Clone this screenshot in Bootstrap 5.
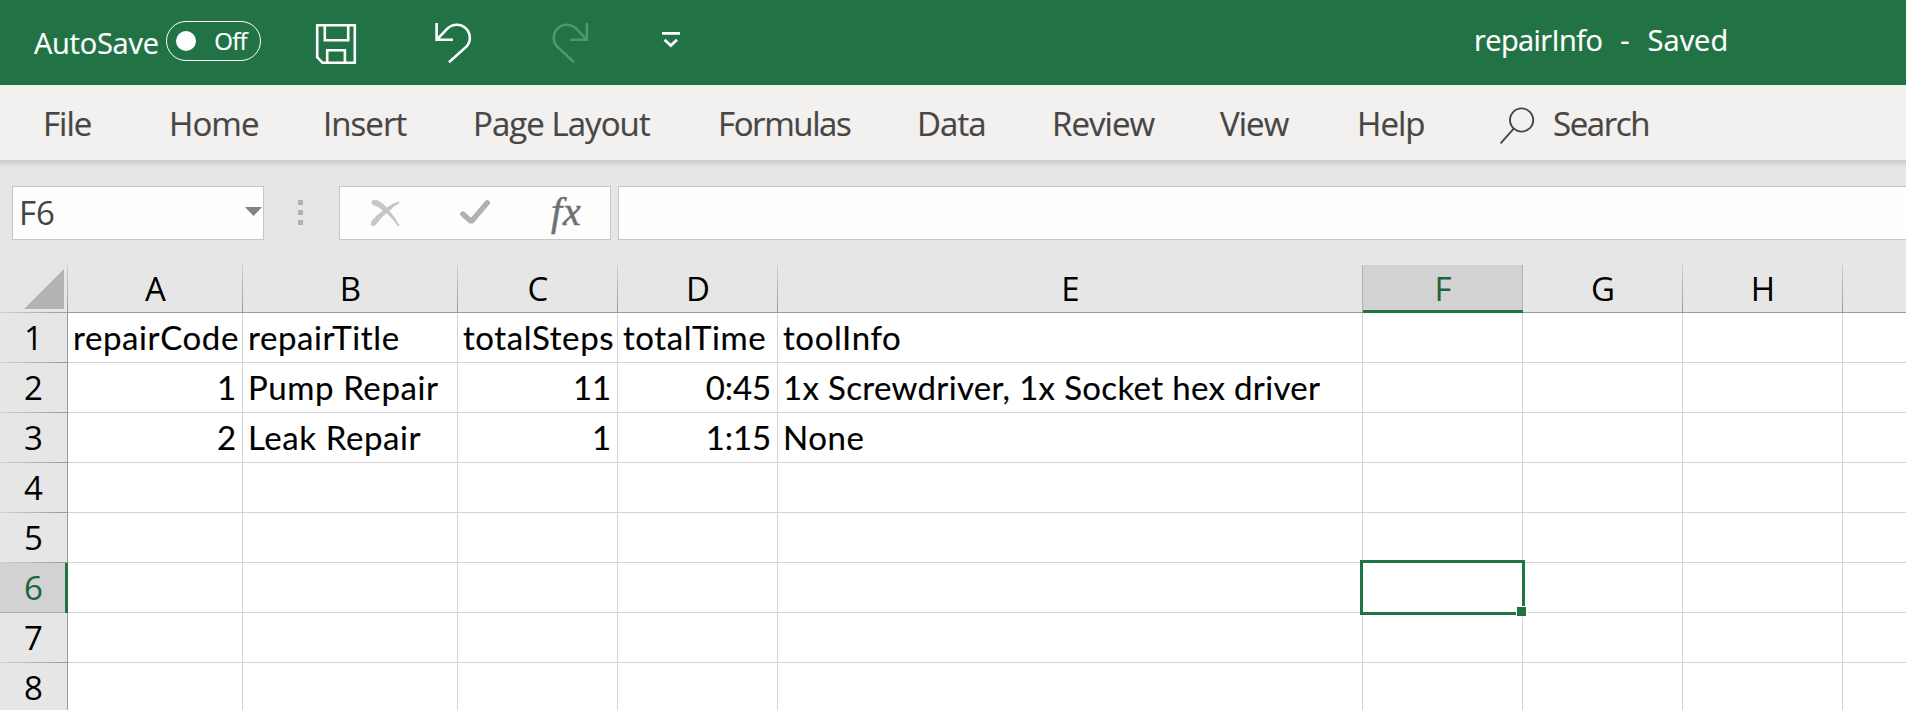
<!DOCTYPE html>
<html lang="en">
<head>
<meta charset="utf-8">
<title>repairInfo - Saved</title>
<link href="https://cdn.jsdelivr.net/npm/bootstrap@5.3.0/dist/css/bootstrap.min.css" rel="stylesheet">
<style>
  body { font-family: "Open Sans", "Noto Sans", sans-serif; font-size: 33px; line-height: 1.2; background: #fff; color: #000; height: 710px; overflow: hidden; }
  svg { display: block; flex: none; }
  .title-bar { height: 85px; background: #217346; color: #fff; font-size: 29px; -webkit-text-stroke: .2px; }
  .autosave { margin-left: 34px; width: 132px; letter-spacing: -.25px; padding-top: 23px; line-height: 40px; }
  .switch-pill { flex: none; width: 95px; height: 40px; margin-top: 21px; border: 1px solid #fff; border-radius: 20px; padding: 0 13px 0 9px; font-size: 24px; letter-spacing: -.7px; }
  .knob { width: 20px; height: 20px; border-radius: 50%; background: #fff; }
  .doc-name { margin-left: 773px; padding-top: 20px; line-height: 40px; gap: 18px; }
  .file-name { letter-spacing: -.6px; }
  .tabs { height: 75px; background: #f3f1f0; color: #484644; display: grid; padding-left: 43px; line-height: 78px;
    grid-template-columns: 126px 154px 150px 245px 199px 135px 168px 137px 140px auto; -webkit-text-stroke: .2px; }
  .tabs .nav-link { padding: 0; color: inherit; white-space: nowrap; letter-spacing: -.95px; }
  .tabs .tight { letter-spacing: -1.4px; }
  .formula-area { height: 105px; background: #e6e6e6 linear-gradient(#cacaca, #e6e6e6) top / 100% 7px no-repeat; padding: 26px 0 0 12px; }
  .field { height: 54px; border: 1px solid #c6c6c6; background: #fdfdfd; }
  .name-box { width: 252px; padding: 0 1px 0 6px; color: #444; }
  .grip { width: 5px; margin: 14px 36px 0 34px; }
  .grip i { display: block; width: 5px; height: 5px; margin-bottom: 5px; background: #b2b2b2; }
  .fx-box { width: 272px; margin-right: 7px; padding-left: 31px; }
  .fx-label { font: italic 40px/50px "Liberation Serif", serif; color: #707070; margin-left: 60px; letter-spacing: .8px; -webkit-text-stroke: .5px; }
  .sheet { table-layout: fixed; width: 1943px; border-collapse: separate; border-spacing: 0; line-height: 40px; }
  .sheet th { font-weight: 400; text-align: center; background-color: #e6e6e6; padding: 0; }
  .sheet thead th { height: 48px; border-bottom: 1px solid #999; background: linear-gradient(#d0d0d0, #999) right / 1px 100% no-repeat #e6e6e6; }
  .sheet thead th:first-child { border-image: linear-gradient(90deg, #d2d2d2, #999) 1; border-width: 0 0 1px; border-style: solid; }
  .sheet tbody th { height: 50px; border-right: 1px solid #999; background: linear-gradient(90deg, #d2d2d2, #999) bottom / 100% 1px no-repeat #e6e6e6; }
  .sheet td { height: 50px; padding: 0 6px 2px 5px; border-right: 1px solid #d4d4d4; border-bottom: 1px solid #d4d4d4; font-family: Lato, sans-serif; letter-spacing: .6px; white-space: nowrap; -webkit-text-stroke: .15px; }
  .sheet td.text-end { letter-spacing: -.1px; }
  .sheet td.long { letter-spacing: .33px; }
  .sheet thead th.picked { background: linear-gradient(#b1b1b1, #b1b1b1) right / 1px 100% no-repeat #d2d2d2; border-bottom: 3px solid #217346; color: #1d633c; padding-top: 2px; }
  .sheet thead th.before-picked { background-image: linear-gradient(#b1b1b1, #b1b1b1); }
  .sheet tbody th.picked { background: linear-gradient(#b1b1b1, #b1b1b1) bottom / 100% 1px no-repeat #d2d2d2; border-right: 3px solid #217346; color: #1d633c; padding-left: 2px; }
  .cursor { top: -3px; left: -3px; width: 165px; height: 55px; border: 3px solid #217346; }
  .cursor i { position: absolute; right: -5px; bottom: -5px; width: 11px; height: 11px; background: #217346; border: 1px solid #fff; }
</style>
</head>
<body>
<header class="title-bar d-flex align-items-start">
  <div class="autosave">AutoSave</div>
  <div class="switch-pill d-flex align-items-center justify-content-between"><span class="knob"></span><span>Off</span></div>
  <svg width="440" height="85" viewBox="261 0 440 85" fill="none" stroke="#fff" stroke-width="2.6">
    <path d="M317.2 25.2H354.8V62.8H322.5L317.2 57.2ZM324.8 25V40.3H348.2V25M327.2 63V50.2H344.9V63"/>
    <path d="M436.6 23V39.7H453M437 39.5L447.8 28.2A13.1 13.1 0 0 1 466.6 46.4L449 62.3"/>
    <path stroke="#4f966c" d="M586.9 23V39.7H570M586.6 39.5L575.8 28.2A13.1 13.1 0 0 0 557 46.4L574 62.3"/>
    <path d="M662 33.4H680M664.5 39.8L670.8 45.6L677 39.8" stroke-width="2.8"/>
  </svg>
  <div class="doc-name d-flex"><span class="file-name">repairInfo</span><span>-</span><span>Saved</span></div>
</header>
<nav class="tabs nav">
  <a class="nav-link">File</a><a class="nav-link">Home</a><a class="nav-link">Insert</a><a class="nav-link">Page Layout</a><a class="nav-link tight">Formulas</a><a class="nav-link">Data</a><a class="nav-link">Review</a><a class="nav-link">View</a><a class="nav-link">Help</a>
  <a class="nav-link tight d-flex"><svg width="56" height="75" viewBox="1497 85 56 75" fill="none" stroke="#484644" stroke-width="1.9"><circle cx="1521.6" cy="120" r="11.6"/><path d="M1513.7 128.6L1500.6 143.3"/></svg><span>Search</span></a>
</nav>
<div class="formula-area d-flex">
  <div class="field name-box d-flex align-items-center justify-content-between"><span>F6</span><svg width="17" height="9" class="mb-1"><path d="M0 0H17L8.500 9Z" fill="#808486"/></svg></div>
  <div class="grip"><i></i><i></i><i></i></div>
  <div class="field fx-box d-flex">
    <svg width="120" height="52" viewBox="371 187 120 52">
      <path fill="#c6c6c6" d="M371.500 202Q373 198.500 378 200.500Q382 202.500 387 207.500Q393 203 398.500 201.500L399.500 203Q394 206 389.500 211Q395 217 399.500 225.500L398 226.500Q392 218 386.500 213Q380 219 376 224.500Q373 227.500 371 225Q370 223 372.500 220Q377.500 214 383 210.500Q378 206 373 205Q371 204 371.500 202Z"/>
      <path fill="none" stroke="#b1b1b1" stroke-width="5.400" stroke-linecap="round" stroke-linejoin="bevel" d="M462.800 214L471.300 221.500L487.300 202.800"/>
    </svg>
    <span class="fx-label">fx</span>
  </div>
  <div class="field flex-grow-1 border-end-0"></div>
</div>
<table class="sheet">
  <colgroup><col style="width:68px"><col style="width:175px"><col style="width:215px"><col style="width:160px"><col style="width:160px"><col style="width:585px"><col style="width:160px"><col style="width:160px"><col style="width:160px"><col style="width:100px"></colgroup>
  <thead><tr><th><svg width="68" height="47" viewBox="0 265 68 47"><path d="M24 309L64 269V309Z" fill="#b3b3b3"/></svg></th><th>A</th><th>B</th><th>C</th><th>D</th><th class="before-picked">E</th><th class="picked">F</th><th>G</th><th>H</th><th></th></tr></thead>
  <tbody>
    <tr><th>1</th><td>repairCode</td><td>repairTitle</td><td>totalSteps</td><td>totalTime</td><td>toolInfo</td><td></td><td></td><td></td><td></td></tr>
    <tr><th>2</th><td class="text-end">1</td><td>Pump Repair</td><td class="text-end">11</td><td class="text-end">0:45</td><td class="long">1x Screwdriver, 1x Socket hex driver</td><td></td><td></td><td></td><td></td></tr>
    <tr><th>3</th><td class="text-end">2</td><td>Leak Repair</td><td class="text-end">1</td><td class="text-end">1:15</td><td>None</td><td></td><td></td><td></td><td></td></tr>
    <tr><th>4</th><td></td><td></td><td></td><td></td><td></td><td></td><td></td><td></td><td></td></tr>
    <tr><th>5</th><td></td><td></td><td></td><td></td><td></td><td></td><td></td><td></td><td></td></tr>
    <tr><th class="picked">6</th><td></td><td></td><td></td><td></td><td></td><td class="position-relative"><div class="cursor position-absolute"><i></i></div></td><td></td><td></td><td></td></tr>
    <tr><th>7</th><td></td><td></td><td></td><td></td><td></td><td></td><td></td><td></td><td></td></tr>
    <tr><th>8</th><td></td><td></td><td></td><td></td><td></td><td></td><td></td><td></td><td></td></tr>
  </tbody>
</table>
<script src="https://cdn.jsdelivr.net/npm/bootstrap@5.3.0/dist/js/bootstrap.bundle.min.js"></script>
</body>
</html>
